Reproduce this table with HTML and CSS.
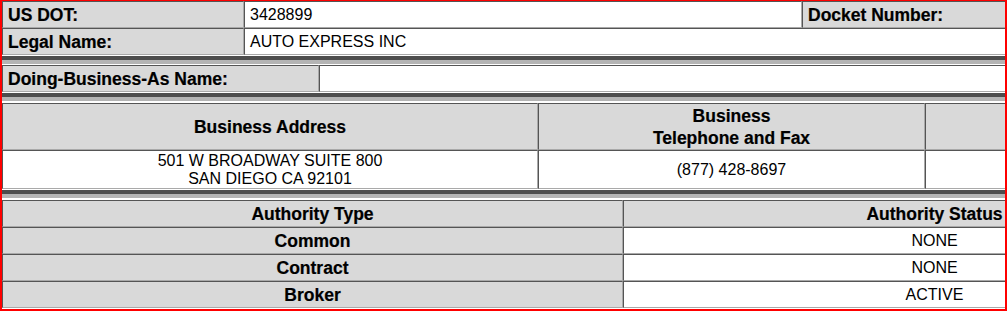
FILE: index.html
```html
<!DOCTYPE html>
<html lang="en">
<head>
  <meta charset="UTF-8" />
  <title>Company Snapshot - AUTO EXPRESS INC</title>
  <link rel="stylesheet" href="styles.css">
</head>
<body>
  <div class="snapshot">
    <!-- Carrier identity -->
    <table class="grid">
      <colgroup>
        <col class="w-242"><col class="w-558"><col class="w-240"><col>
      </colgroup>
      <tr>
        <th class="label">US DOT:</th>
        <td class="value">3428899</td>
        <th class="label">Docket Number:</th>
        <td class="value">&nbsp;</td>
      </tr>
      <tr>
        <th class="label">Legal Name:</th>
        <td class="value" colspan="3">AUTO EXPRESS INC</td>
      </tr>
    </table>
    <div class="rule tight"></div>

    <table class="grid">
      <colgroup>
        <col class="w-317"><col>
      </colgroup>
      <tr>
        <th class="label">Doing-Business-As Name:</th>
        <td class="value">&nbsp;</td>
      </tr>
    </table>
    <div class="rule"></div>

    <!-- Contact info -->
    <table class="grid">
      <colgroup>
        <col class="w-536"><col class="w-387"><col>
      </colgroup>
      <tr class="head-row">
        <th class="label center">Business Address</th>
        <th class="label center">Business<br>Telephone and Fax</th>
        <th class="label center">&nbsp;</th>
      </tr>
      <tr class="address-row">
        <td class="value center">501 W BROADWAY SUITE 800<br>SAN DIEGO CA 92101</td>
        <td class="value center">(877) 428-8697</td>
        <td class="value center">&nbsp;</td>
      </tr>
    </table>
    <div class="rule"></div>

    <!-- Operating authority -->
    <table class="grid">
      <colgroup>
        <col class="w-621"><col>
      </colgroup>
      <tr>
        <th class="label center">Authority Type</th>
        <th class="label center">Authority Status</th>
      </tr>
      <tr>
        <th class="label center">Common</th>
        <td class="value center">NONE</td>
      </tr>
      <tr>
        <th class="label center">Contract</th>
        <td class="value center">NONE</td>
      </tr>
      <tr>
        <th class="label center">Broker</th>
        <td class="value center">ACTIVE</td>
      </tr>
    </table>
  </div>
</body>
</html>
```

FILE: styles.css
```css
body {
  margin: 0;
  font-family: "Liberation Sans", Arial, sans-serif;
  font-size: 16px;
  color: #000;
  background: #fff;
}

.snapshot {
  width: 1007px;
  height: 311px;
  box-sizing: border-box;
  border: 2px solid #f00;
  border-top-width: 1px;
  overflow: hidden;
}

.grid {
  table-layout: fixed;
  width: 1244px;
  border-collapse: separate;
  border-spacing: 0;
}

.grid th,
.grid td {
  border: 1px solid;
  border-color: #555 #a9a9a9 #a9a9a9 #555;
  padding: 4px 5px 3px;
  line-height: 18px;
  white-space: nowrap;
  overflow: hidden;
}

.label {
  background: #d9d9d9;
  font-size: 17.5px;
  font-weight: bold;
  text-align: left;
  -webkit-text-stroke: 0.2px #000;
}

.value {
  background: #fff;
  text-align: left;
}

.center {
  text-align: center;
}

.head-row th {
  padding: 1px 5px 0;
  line-height: 22px;
}

.address-row td {
  padding: 1px 5px 0;
  line-height: 18px;
}

/* thick divider between blocks */
.rule {
  height: 4px;
  margin: 1px 0 2px;
  border-top: 4px solid #4d4d4d;
  background: #b4b4b4;
}

.rule.tight {
  margin-bottom: 1px;
}

.w-242 { width: 242px; }
.w-558 { width: 558px; }
.w-240 { width: 240px; }
.w-317 { width: 317px; }
.w-536 { width: 536px; }
.w-387 { width: 387px; }
.w-621 { width: 621px; }
```
